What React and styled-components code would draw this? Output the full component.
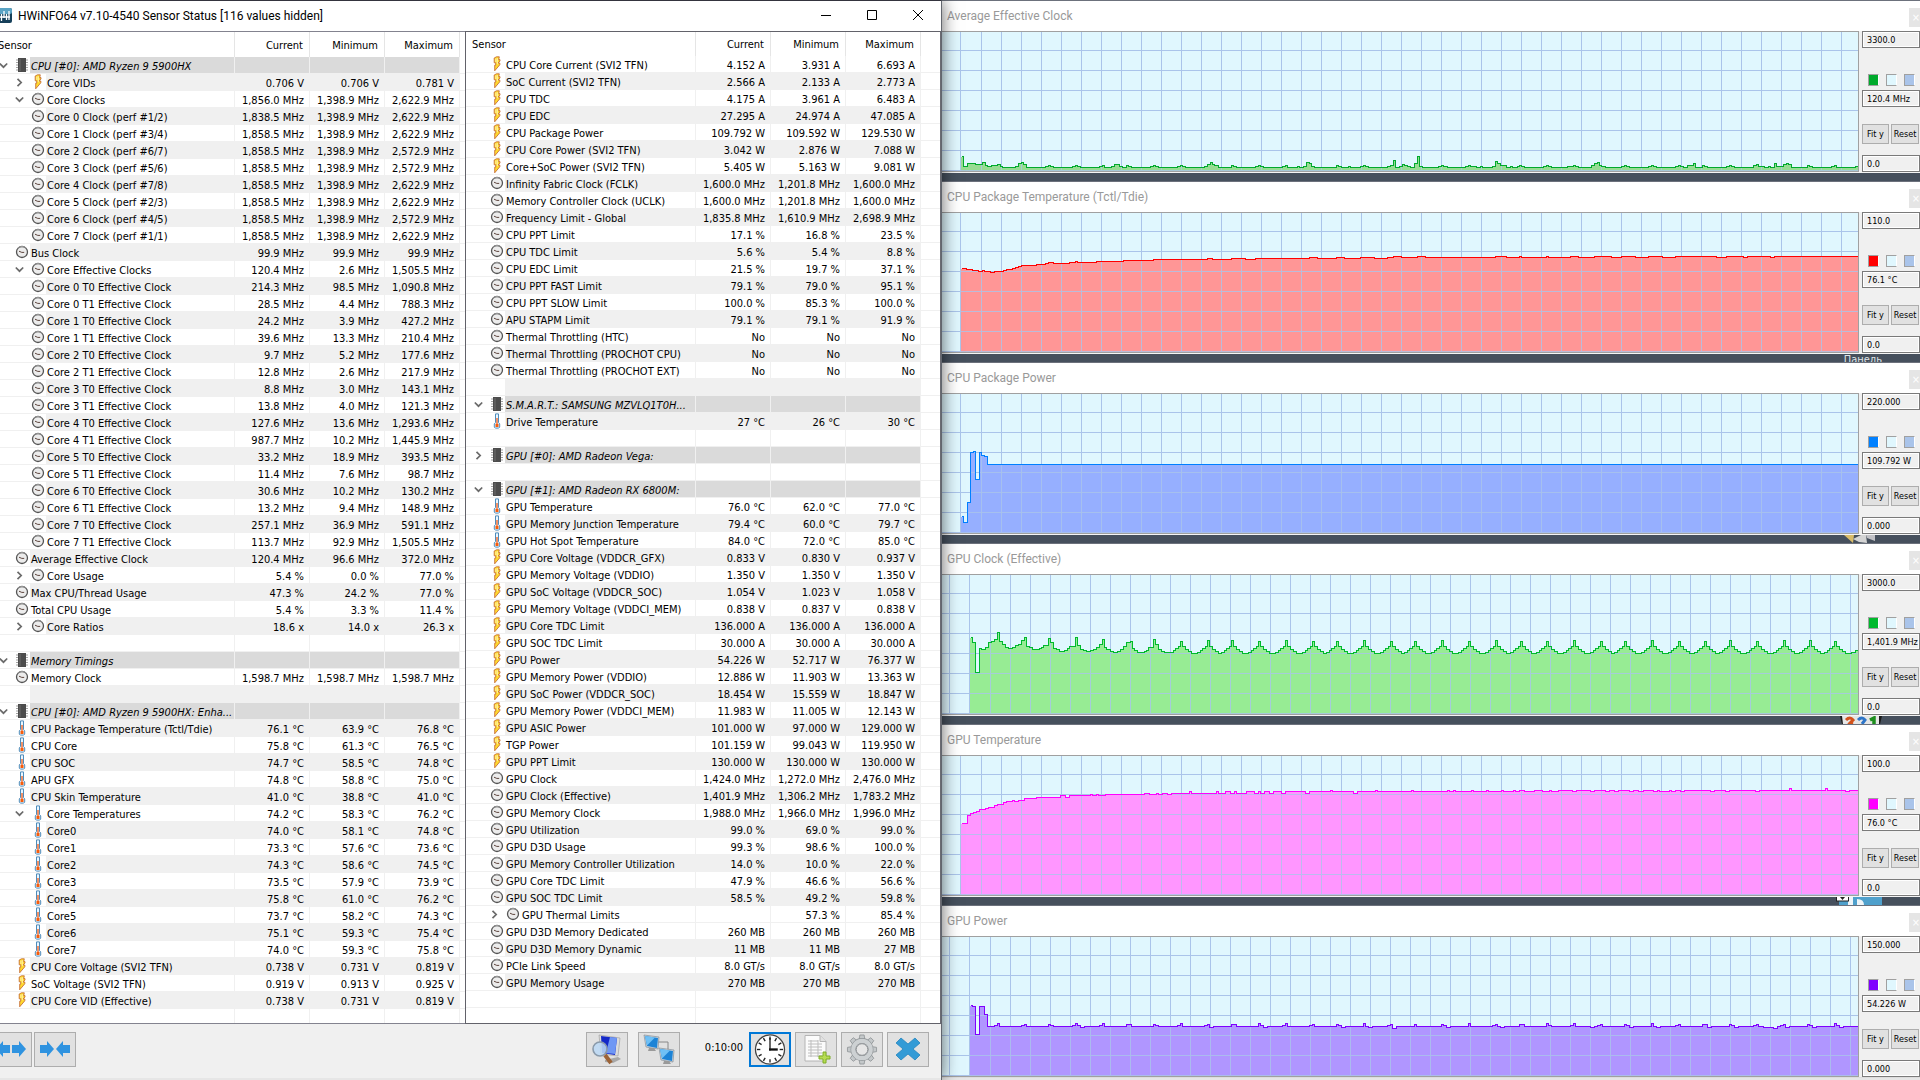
import React from "react";
import styled, { createGlobalStyle, css } from "styled-components";

const uiFont = '"DejaVu Sans Condensed", "DejaVu Sans", sans-serif';
const titleFont = 'Roboto, "Noto Sans", sans-serif';

const GlobalStyle = createGlobalStyle`
  * { box-sizing: border-box; }
  html, body { margin: 0; padding: 0; }
  body {
    background: #46505d;
    font-family: ${uiFont};
    font-size: 11px;
    color: #000;
    overflow: hidden;
  }
  button, input { font: inherit; color: inherit; margin: 0; padding: 0; border-radius: 0; }
`;

/* ---------- sensor data: indent level, icon kind, name, current, min, max ---------- */

const same = (v) => [v, v, v];

const cpuRows = [
  { group: true, open: true, name: "CPU [#0]: AMD Ryzen 9 5900HX" },
  { level: 1, kind: "bolt", open: false, name: "Core VIDs", v: ["0.706 V", "0.706 V", "0.781 V"] },
  { level: 1, kind: "clock", open: true, name: "Core Clocks", v: ["1,856.0 MHz", "1,398.9 MHz", "2,622.9 MHz"] },
  ...[
    ["Core 0 Clock (perf #1/2)", "1,838.5 MHz", "2,622.9 MHz"],
    ["Core 1 Clock (perf #3/4)", "1,858.5 MHz", "2,622.9 MHz"],
    ["Core 2 Clock (perf #6/7)", "1,858.5 MHz", "2,572.9 MHz"],
    ["Core 3 Clock (perf #5/6)", "1,858.5 MHz", "2,572.9 MHz"],
    ["Core 4 Clock (perf #7/8)", "1,858.5 MHz", "2,622.9 MHz"],
    ["Core 5 Clock (perf #2/3)", "1,858.5 MHz", "2,622.9 MHz"],
    ["Core 6 Clock (perf #4/5)", "1,858.5 MHz", "2,572.9 MHz"],
    ["Core 7 Clock (perf #1/1)", "1,858.5 MHz", "2,622.9 MHz"],
  ].map(([name, cur, max]) => ({ level: 1, kind: "clock", name, v: [cur, "1,398.9 MHz", max] })),
  { kind: "clock", name: "Bus Clock", v: same("99.9 MHz") },
  { level: 1, kind: "clock", open: true, name: "Core Effective Clocks", v: ["120.4 MHz", "2.6 MHz", "1,505.5 MHz"] },
  ...[
    ["214.3", "98.5", "1,090.8"],
    ["28.5", "4.4", "788.3"],
    ["24.2", "3.9", "427.2"],
    ["39.6", "13.3", "210.4"],
    ["9.7", "5.2", "177.6"],
    ["12.8", "2.6", "217.9"],
    ["8.8", "3.0", "143.1"],
    ["13.8", "4.0", "121.3"],
    ["127.6", "13.6", "1,293.6"],
    ["987.7", "10.2", "1,445.9"],
    ["33.2", "18.9", "393.5"],
    ["11.4", "7.6", "98.7"],
    ["30.6", "10.2", "130.2"],
    ["13.2", "9.4", "148.9"],
    ["257.1", "36.9", "591.1"],
    ["113.7", "92.9", "1,505.5"],
  ].map((v, i) => ({
    level: 1,
    kind: "clock",
    name: `Core ${Math.floor(i / 2)} T${i % 2} Effective Clock`,
    v: v.map((n) => `${n} MHz`),
  })),
  { kind: "clock", name: "Average Effective Clock", v: ["120.4 MHz", "96.6 MHz", "372.0 MHz"] },
  { level: 1, kind: "clock", open: false, name: "Core Usage", v: ["5.4 %", "0.0 %", "77.0 %"] },
  { kind: "clock", name: "Max CPU/Thread Usage", v: ["47.3 %", "24.2 %", "77.0 %"] },
  { kind: "clock", name: "Total CPU Usage", v: ["5.4 %", "3.3 %", "11.4 %"] },
  { level: 1, kind: "clock", open: false, name: "Core Ratios", v: ["18.6 x", "14.0 x", "26.3 x"] },
  { blank: true },
  { group: true, open: true, name: "Memory Timings" },
  { kind: "clock", name: "Memory Clock", v: same("1,598.7 MHz") },
  { blank: true },
  { group: true, open: true, name: "CPU [#0]: AMD Ryzen 9 5900HX: Enha..." },
  { kind: "temp", name: "CPU Package Temperature (Tctl/Tdie)", v: ["76.1 °C", "63.9 °C", "76.8 °C"] },
  { kind: "temp", name: "CPU Core", v: ["75.8 °C", "61.3 °C", "76.5 °C"] },
  { kind: "temp", name: "CPU SOC", v: ["74.7 °C", "58.5 °C", "74.8 °C"] },
  { kind: "temp", name: "APU GFX", v: ["74.8 °C", "58.8 °C", "75.0 °C"] },
  { kind: "temp", name: "CPU Skin Temperature", v: ["41.0 °C", "38.8 °C", "41.0 °C"] },
  { level: 1, kind: "temp", open: true, name: "Core Temperatures", v: ["74.2 °C", "58.3 °C", "76.2 °C"] },
  ...[
    ["74.0", "58.1", "74.8"],
    ["73.3", "57.6", "73.6"],
    ["74.3", "58.6", "74.5"],
    ["73.5", "57.9", "73.9"],
    ["75.8", "61.0", "76.2"],
    ["73.7", "58.2", "74.3"],
    ["75.1", "59.3", "75.4"],
    ["74.0", "59.3", "75.8"],
  ].map((v, i) => ({ level: 1, kind: "temp", name: `Core${i}`, v: v.map((n) => `${n} °C`) })),
  { kind: "bolt", name: "CPU Core Voltage (SVI2 TFN)", v: ["0.738 V", "0.731 V", "0.819 V"] },
  { kind: "bolt", name: "SoC Voltage (SVI2 TFN)", v: ["0.919 V", "0.913 V", "0.925 V"] },
  { kind: "bolt", name: "CPU Core VID (Effective)", v: ["0.738 V", "0.731 V", "0.819 V"] },
  { blank: true, last: true },
].map((r, i) => ({ ...r, shaded: i % 2 === 1 }));

const gpuRows = [
  { kind: "bolt", name: "CPU Core Current (SVI2 TFN)", v: ["4.152 A", "3.931 A", "6.693 A"] },
  { kind: "bolt", name: "SoC Current (SVI2 TFN)", v: ["2.566 A", "2.133 A", "2.773 A"] },
  { kind: "bolt", name: "CPU TDC", v: ["4.175 A", "3.961 A", "6.483 A"] },
  { kind: "bolt", name: "CPU EDC", v: ["27.295 A", "24.974 A", "47.085 A"] },
  { kind: "bolt", name: "CPU Package Power", v: ["109.792 W", "109.592 W", "129.530 W"] },
  { kind: "bolt", name: "CPU Core Power (SVI2 TFN)", v: ["3.042 W", "2.876 W", "7.088 W"] },
  { kind: "bolt", name: "Core+SoC Power (SVI2 TFN)", v: ["5.405 W", "5.163 W", "9.081 W"] },
  { kind: "clock", name: "Infinity Fabric Clock (FCLK)", v: ["1,600.0 MHz", "1,201.8 MHz", "1,600.0 MHz"] },
  { kind: "clock", name: "Memory Controller Clock (UCLK)", v: ["1,600.0 MHz", "1,201.8 MHz", "1,600.0 MHz"] },
  { kind: "clock", name: "Frequency Limit - Global", v: ["1,835.8 MHz", "1,610.9 MHz", "2,698.9 MHz"] },
  { kind: "clock", name: "CPU PPT Limit", v: ["17.1 %", "16.8 %", "23.5 %"] },
  { kind: "clock", name: "CPU TDC Limit", v: ["5.6 %", "5.4 %", "8.8 %"] },
  { kind: "clock", name: "CPU EDC Limit", v: ["21.5 %", "19.7 %", "37.1 %"] },
  { kind: "clock", name: "CPU PPT FAST Limit", v: ["79.1 %", "79.0 %", "95.1 %"] },
  { kind: "clock", name: "CPU PPT SLOW Limit", v: ["100.0 %", "85.3 %", "100.0 %"] },
  { kind: "clock", name: "APU STAPM Limit", v: ["79.1 %", "79.1 %", "91.9 %"] },
  { kind: "clock", name: "Thermal Throttling (HTC)", v: same("No") },
  { kind: "clock", name: "Thermal Throttling (PROCHOT CPU)", v: same("No") },
  { kind: "clock", name: "Thermal Throttling (PROCHOT EXT)", v: same("No") },
  { blank: true },
  { group: true, open: true, name: "S.M.A.R.T.: SAMSUNG MZVLQ1T0H..." },
  { kind: "temp", name: "Drive Temperature", v: ["27 °C", "26 °C", "30 °C"] },
  { blank: true },
  { group: true, open: false, name: "GPU [#0]: AMD Radeon Vega:" },
  { blank: true },
  { group: true, open: true, name: "GPU [#1]: AMD Radeon RX 6800M:" },
  { kind: "temp", name: "GPU Temperature", v: ["76.0 °C", "62.0 °C", "77.0 °C"] },
  { kind: "temp", name: "GPU Memory Junction Temperature", v: ["79.4 °C", "60.0 °C", "79.7 °C"] },
  { kind: "temp", name: "GPU Hot Spot Temperature", v: ["84.0 °C", "72.0 °C", "85.0 °C"] },
  { kind: "bolt", name: "GPU Core Voltage (VDDCR_GFX)", v: ["0.833 V", "0.830 V", "0.937 V"] },
  { kind: "bolt", name: "GPU Memory Voltage (VDDIO)", v: same("1.350 V") },
  { kind: "bolt", name: "GPU SoC Voltage (VDDCR_SOC)", v: ["1.054 V", "1.023 V", "1.058 V"] },
  { kind: "bolt", name: "GPU Memory Voltage (VDDCI_MEM)", v: ["0.838 V", "0.837 V", "0.838 V"] },
  { kind: "bolt", name: "GPU Core TDC Limit", v: same("136.000 A") },
  { kind: "bolt", name: "GPU SOC TDC Limit", v: same("30.000 A") },
  { kind: "bolt", name: "GPU Power", v: ["54.226 W", "52.717 W", "76.377 W"] },
  { kind: "bolt", name: "GPU Memory Power (VDDIO)", v: ["12.886 W", "11.903 W", "13.363 W"] },
  { kind: "bolt", name: "GPU SoC Power (VDDCR_SOC)", v: ["18.454 W", "15.559 W", "18.847 W"] },
  { kind: "bolt", name: "GPU Memory Power (VDDCI_MEM)", v: ["11.983 W", "11.005 W", "12.143 W"] },
  { kind: "bolt", name: "GPU ASIC Power", v: ["101.000 W", "97.000 W", "129.000 W"] },
  { kind: "bolt", name: "TGP Power", v: ["101.159 W", "99.043 W", "119.950 W"] },
  { kind: "bolt", name: "GPU PPT Limit", v: same("130.000 W") },
  { kind: "clock", name: "GPU Clock", v: ["1,424.0 MHz", "1,272.0 MHz", "2,476.0 MHz"] },
  { kind: "clock", name: "GPU Clock (Effective)", v: ["1,401.9 MHz", "1,306.2 MHz", "1,783.2 MHz"] },
  { kind: "clock", name: "GPU Memory Clock", v: ["1,988.0 MHz", "1,966.0 MHz", "1,996.0 MHz"] },
  { kind: "clock", name: "GPU Utilization", v: ["99.0 %", "69.0 %", "99.0 %"] },
  { kind: "clock", name: "GPU D3D Usage", v: ["99.3 %", "98.6 %", "100.0 %"] },
  { kind: "clock", name: "GPU Memory Controller Utilization", v: ["14.0 %", "10.0 %", "22.0 %"] },
  { kind: "clock", name: "GPU Core TDC Limit", v: ["47.9 %", "46.6 %", "56.6 %"] },
  { kind: "clock", name: "GPU SOC TDC Limit", v: ["58.5 %", "49.2 %", "59.8 %"] },
  { level: 1, kind: "clock", open: false, name: "GPU Thermal Limits", v: ["", "57.3 %", "85.4 %"] },
  { kind: "clock", name: "GPU D3D Memory Dedicated", v: same("260 MB") },
  { kind: "clock", name: "GPU D3D Memory Dynamic", v: ["11 MB", "11 MB", "27 MB"] },
  { kind: "clock", name: "PCIe Link Speed", v: same("8.0 GT/s") },
  { kind: "clock", name: "GPU Memory Usage", v: same("270 MB") },
  { blank: true },
  { blank: true, last: true },
].map((r, i) => ({ ...r, shaded: i < 51 ? i % 2 === 1 : i === 52 || i === 54 }));

/* ---------- chart series: "x,y" starts of flat steps ---------- */

const parse = (s) => s.trim().split(/\s+/).map((p) => p.split(",").map(Number));

const avgClock = parse(`19,124 21,134 25,131 33,132 40,130 43,133 45,134 49,133 55,132 58,134 60,135 73,134 76,131
79,130 81,132 84,135 103,134 106,133 108,134 111,135 130,134 133,133 135,134 138,135 157,134 160,133 162,135 169,134
172,132 177,134 180,135 184,133 186,134 189,135 208,134 211,133 213,134 216,135 235,134 238,133 240,134 243,135
262,134 265,132 268,130 270,132 272,133 276,135 289,133 291,134 294,135 313,134 316,133 318,134 321,135 340,134
343,133 345,135 355,134 357,135 361,134 364,130 367,131 369,134 372,135 394,133 396,134 399,135 406,134 408,135
418,134 421,133 423,134 426,135 445,134 448,133 451,128 453,135 457,134 460,132 462,133 465,134 468,135 472,131
475,124 477,134 480,135 496,134 499,133 501,134 505,135 523,134 526,133 528,134 534,135 538,134 540,135 550,134
553,129 555,131 558,133 564,135 568,134 570,135 575,134 577,133 579,134 582,135 601,134 604,133 606,134 609,135
625,134 631,133 633,134 636,135 649,133 652,131 655,130 657,133 659,134 663,135 679,134 682,133 684,134 687,135
706,134 709,133 711,134 714,135 733,134 736,133 738,134 741,135 745,133 751,131 753,135 760,133 762,134 765,135
784,134 787,133 789,134 792,135 811,133 814,132 816,134 822,135 826,134 828,135 832,131 834,134 841,132 844,131
846,132 849,135 865,133 867,134 870,135 889,134 892,133 894,135 913,134`);

const cpuTemp = parse(`19,55 24,56 30,57 36,58 40,57 42,58 48,59 52,58 61,57 64,56 70,55 73,54 76,53 79,52 94,51 103,50
106,49 111,50 127,49 133,48 135,49 154,48 181,47 211,46 265,45 270,46 289,45 303,46 313,45 367,44 375,45 394,44 402,45
418,44 432,45 445,44 451,43 459,44 475,43 483,44 553,43 564,44 577,43 579,44 604,43 606,44 628,43 636,44 652,43 669,44
679,43 693,44 706,43 720,44 733,43 774,44 784,43 801,44 805,43 828,44 832,43`);

const cpuPower = parse("19,122 21,128 25,108 28,58 31,57 33,85 37,58 39,61 42,62 45,70");

const clockPeaks = [
  238, 265, 289, 316, 343, 370, 394, 421, 448, 472, 499, 526, 553, 578, 604, 631, 658, 682, 709, 736, 762, 787, 814,
  841, 867, 892,
];
const gpuClock = [
  ...parse(`28,62 30,67 33,97 37,73 39,74 43,72 46,67 49,66 52,64 55,57 57,66 60,69 63,72 66,73 70,72 73,70 76,69 79,65
82,62 84,71 87,72 90,74 97,73 99,72 101,70 106,63 108,67 111,73 114,74 117,76 122,75 125,73 127,71 133,62 135,70 138,74
141,75 144,76 148,75 151,74 154,72 157,69 160,64 162,72 164,74 168,76 171,77 175,76 178,74 181,71 184,67 188,66 190,73
192,75 195,77 202,76 204,75 206,72 211,64 213,69 216,74 219,76 222,77`),
  ...clockPeaks.flatMap((p) => [
    [p - 10, 77],
    [p - 7, 75],
    [p - 5, 73],
    [p - 2, 71],
    [p, p % 2 ? 65 : 66],
    [p + 2, 71],
    [p + 5, 74],
    [p + 8, 76],
    [p + 11, 78],
  ]),
  [909, 77],
  [913, 75],
];

const gpuTemp = parse(`19,67 25,59 28,57 31,56 34,55 37,53 43,52 46,51 52,49 55,48 61,46 64,45 70,44 72,45 76,44 82,42
94,41 118,39 123,41 127,39 148,38 150,39 154,38 156,39 163,38 202,37 207,38 214,37 216,38 220,37 225,38 229,37 247,35
249,37 274,35 276,37 283,35 288,37 292,35 294,37 304,35 312,37 316,35 318,37 322,35 327,37 331,35 339,37 343,35 363,37
367,35 388,34 390,35 411,37 415,35 433,34 435,35 469,34 471,35 505,34 507,35 511,34 513,35 529,34 531,35 544,34 546,35
559,34 561,35 571,34 573,35 577,34 582,35 592,34 600,35 607,34 609,35 616,34 630,35 634,34 648,35 652,34 663,35 667,34
672,35 676,34 687,35 691,34 696,35 701,34 711,35 715,34 717,35 727,34 729,35 733,34 738,35 742,34 768,35 772,34 783,35
787,34 813,35 817,34 847,32 849,34 883,32 885,34 903,35 907,34`);

const gpuPower = parse(`28,68 30,69 33,97 37,69 42,77 45,89 52,88 55,86 57,89 79,88 82,87 84,89 106,87 108,88 111,89
130,88 133,86 135,88 138,90 142,89 157,88 160,86 162,89 184,87 189,89 211,87 213,88 216,89 235,88 238,86 240,89 262,88
265,87 267,90 271,89 289,87 294,89 316,86 318,88 321,90 325,89 340,88 343,86 345,89 367,88 370,87 372,89 394,87 396,88
399,90 403,89 421,86 423,89 426,90 430,89 445,88 448,87 450,91 454,89 472,87 474,89 499,87 501,88 504,90 508,89 526,86
528,89 550,88 553,87 555,89 558,90 562,89 577,87 582,89 604,86 606,88 609,89 628,88 631,86 633,89 648,90 652,89 655,88
658,87 660,89 682,87 684,88 687,90 691,89 709,86 711,89 714,90 718,89 733,88 736,87 738,89 760,87 765,90 769,89 787,87
789,88 792,90 796,89 811,88 814,87 816,89 821,90 831,91 835,89 838,88 841,87 843,90 847,89 865,87 867,88 870,90 874,89
892,86 894,88 897,90 901,89`);

const charts = [
  { title: "Average Effective Clock", max: "3300.0", value: "120.4 MHz", min: "0.0", line: "#00aa2c", fill: "#97dc92", first: 18, data: avgClock },
  { title: "CPU Package Temperature (Tctl/Tdie)", max: "110.0", value: "76.1 °C", min: "0.0", line: "#ff0000", fill: "#ff9696", first: 18, data: cpuTemp, peek: "label" },
  { title: "CPU Package Power", max: "220.000", value: "109.792 W", min: "0.000", line: "#0080ff", fill: "#96afff", first: 18, data: cpuPower, peek: "cone" },
  { title: "GPU Clock (Effective)", max: "3000.0", value: "1,401.9 MHz", min: "0.0", line: "#00b92d", fill: "#97ec94", first: 27, data: gpuClock, peek: "digits" },
  { title: "GPU Temperature", max: "100.0", value: "76.0 °C", min: "0.0", line: "#ff00ff", fill: "#ff96ff", first: 18, data: gpuTemp, peek: "tile" },
  { title: "GPU Power", max: "150.000", value: "54.226 W", min: "0.000", line: "#8000ff", fill: "#b096ff", first: 27, data: gpuPower },
];

/* ---------- desktop and sensor window ---------- */

const Desktop = styled.main`
  display: grid;
  grid-template-columns: minmax(0, 942fr) minmax(0, 978fr);
  min-height: 100vh;
  overflow: hidden;
`;

const SensorWindow = styled.section`
  display: flex;
  flex-direction: column;
  margin-left: -10px;
  background: #f0f0f0;
  border-top: 1px solid #34343e;
  border-right: 1px solid #62666e;
  box-shadow: 0 0 16px rgba(0, 0, 0, 0.6);
  z-index: 1;
`;

const TitleBar = styled.header`
  display: flex;
  align-items: center;
  height: 30px;
  padding-left: 6px;
  background: #fff;
  svg { flex: none; }
`;

const WindowTitle = styled.h1`
  flex: 1;
  margin: 0;
  padding: 0 0 0 6px;
  font: 400 12px/18px ${titleFont};
`;

const CaptionButton = styled.button`
  display: grid;
  place-items: center;
  width: 46px;
  height: 30px;
  padding-bottom: 2px;
  border: 0;
  background: none;
`;

const Lists = styled.div`
  display: grid;
  grid-template-columns: minmax(0, 475fr) minmax(0, 476fr);
`;

const Panel = styled.div`
  background: #fff;
  border: 0 solid #83838f;
  border-width: 1px 0;
  ${(p) => p.$framed && css`
    border-width: 1px;
    border-color: #62626a;
    border-right-color: #6b6b72;
  `}
`;

const SensorTable = styled.table`
  width: 100%;
  table-layout: fixed;
  border-collapse: separate;
  border-spacing: 0;
`;

const ValueCol = styled.col`
  width: 75px;
`;

const TailCol = styled.col`
  width: ${(p) => p.$w}px;
`;

const HeadCell = styled.th`
  height: ${(p) => p.$h}px;
  padding: 2px 6px 0 0;
  border-right: 1px solid #e5e5e5;
  font-weight: 400;
  line-height: 16px;
  text-align: right;
  &:last-child { border-right: 0; }
  ${(p) => p.$name && css`
    padding: 2px 0 0 ${p.$inset ? 6 : 8}px;
    text-align: left;
  `}
`;

const rowBack = (p) => (p.$group ? "#dadada" : p.$shaded ? "#f0f0f0" : "#fff");

const NameCell = styled.td`
  padding: 0;
  border-right: 1px solid #f0f0f0;
  border-bottom: 1px solid #f0f0f0;
`;

const NameLine = styled.div`
  display: flex;
  height: 16px;
  padding-left: ${(p) => (p.$inset ? 4 : 5) + (p.$level || 0) * 16}px;
`;

const Twisty = styled.span`
  display: grid;
  place-items: center;
  flex: none;
  width: 16px;
`;

const IconBox = styled.span`
  display: grid;
  place-items: center;
  flex: none;
  width: 19px;
  padding-left: 3px;
`;

const Label = styled.span`
  flex: 1;
  min-width: 0;
  padding: 2px 0 0 1px;
  line-height: 15px;
  white-space: nowrap;
  overflow: hidden;
  font-style: ${(p) => (p.$group ? "italic" : "normal")};
  background: ${rowBack};
`;

const ValueCell = styled.td`
  height: 17px;
  padding: 2px 5px 0 0;
  border-right: 1px solid #f0f0f0;
  border-bottom: 1px solid #f0f0f0;
  line-height: 14px;
  text-align: right;
  white-space: nowrap;
  background: ${rowBack};
`;

const Reading = styled.span`
  display: block;
  height: 14px;
  line-height: 15px;
`;

const TailCell = styled.td`
  padding: 0;
  border-bottom: 1px solid #f0f0f0;
`;

const LastRow = styled.tr`
  height: ${(p) => p.$h}px;
  td { padding: 0; border-right: 1px solid #f0f0f0; }
  td:last-child { border-right: 0; }
`;

const Toolbar = styled.footer`
  display: flex;
  align-items: center;
  justify-content: space-between;
  height: 54px;
  padding: 0 12px 4px 0;
`;

const ToolGroup = styled.div`
  display: flex;
  align-items: center;
  gap: ${(p) => p.$gap}px;
`;

const ToolButton = styled.button`
  display: grid;
  place-items: center;
  width: 42px;
  height: 35px;
  border: ${(p) => (p.$active ? "2px solid #0078d7" : "1px solid #adadad")};
  background: #e1e1e1;
`;

const Elapsed = styled.time`
  padding: 0 2px 3px 21px;
  line-height: 14px;
`;

const WindowEdge = styled.div`
  flex: 1;
  background: #e6e6e6;
`;

/* ---------- chart windows ---------- */

const ChartColumn = styled.div`
  display: flex;
  flex-direction: column;
`;

const ChartWindow = styled.section`
  border-top: 1px solid #6c717c;
  background: #f0f0f0;
`;

const ChartTitleBar = styled.header`
  display: flex;
  align-items: center;
  justify-content: space-between;
  height: 30px;
  background: #fff;
`;

const ChartTitle = styled.h2`
  margin: 0;
  padding: 0 0 0 5px;
  color: #999;
  font: 400 12px/18px ${titleFont};
`;

const ChartClose = styled.button`
  width: 11px;
  height: 19px;
  margin-top: 3px;
  border: 0;
  background: #e5e5e5;
  color: #fff;
  text-align: right;
  line-height: 16px;
  overflow: hidden;
`;

const ChartBody = styled.div`
  display: flex;
  gap: 3px;
`;

const Plot = styled.div`
  flex: 1;
  min-width: 0;
  border: 1px solid #a0a0a0;
  border-left: 0;
  svg { display: block; width: 100%; height: 139px; background: #e0f7fe; }
`;

const Side = styled.div`
  display: flex;
  flex-direction: column;
  justify-content: space-between;
  flex: none;
  width: 58px;
`;

const Field = styled.input`
  width: 58px;
  height: 17px;
  padding-left: 4px;
  border: 1px solid #7a7a7a;
  outline: 0;
  background: #f0f0f0;
  box-shadow: inset 0 0 0 1px #fff;
  font-size: 9px;
`;

const SideMiddle = styled.div`
  display: flex;
  flex-direction: column;
  padding-top: 15px;
`;

const Swatches = styled.div`
  display: flex;
  gap: 7px;
  padding: 0 5px 4px 6px;
`;

const Swatch = styled.button`
  width: 11px;
  height: 12px;
  border: 1px solid #a0a0a0;
  border-right-color: #fff;
  background: ${(p) => p.$color};
`;

const SideButtons = styled.div`
  display: flex;
  gap: 2px;
  padding: 17px 1px 0 0;
`;

const SideButton = styled.button`
  flex: ${(p) => p.$grow} 1 0;
  height: 20px;
  border: 1px solid #adadad;
  background: #e1e1e1;
  font-size: 9px;
  white-space: nowrap;
`;

const Gap = styled.div`
  display: flex;
  justify-content: flex-end;
  height: ${(p) => (p.$last ? 3 : 9)}px;
  padding-right: 38px;
  border-top: 1px solid ${(p) => (p.$last ? "#ddd" : "#f5f5f5")};
  background: ${(p) => (p.$last ? "#e6e6e6" : "#46505d")};
  overflow: hidden;
`;

const DesktopLabel = styled.span`
  color: #dfe3e8;
  line-height: 12px;
`;

/* ---------- small icons ---------- */

function ClockIcon() {
  return (
    <svg width="14" height="14" viewBox="0 0 14 14">
      <circle cx="7" cy="7" r="5.5" fill="#ececec" stroke="#555" strokeWidth="1.3" />
      <path d="M2.800 3.400A5.500 5.500 0 0 1 11.200 3.400" fill="none" stroke="#9a9a9a" />
      <path d="M4 6.200l2.800 1.200h2.400" fill="none" stroke="#5e463e" strokeWidth="1" />
    </svg>
  );
}

function BoltIcon() {
  return (
    <svg width="8" height="16" viewBox="0 0 8 16">
      <path d="M3.500 .8L1.200 2v4.800h1.500v2.400h-1v5.600L6.800 8.800V7H5.200L7 5V3.600H5.700L6.300 .8z" fill="#ffd92e" stroke="#c0622c" strokeWidth=".8" />
      <path d="M2.900 2.600v3.400M4.300 2.200v6" stroke="#fff6b8" strokeWidth=".9" />
    </svg>
  );
}

function TempIcon() {
  return (
    <svg width="8" height="16" viewBox="0 0 8 16">
      <path d="M2.500 .9h3v8.600l1.200 1.400v3.200l-1 1H2.300l-1-1v-3.200l1.200-1.400z" fill="#eaf6ff" stroke="#4f8cba" />
      <path d="M4 5v7" stroke="#f2682a" strokeWidth="1.4" />
      <rect x="2.500" y="11" width="3" height="3" fill="#f65c0c" />
    </svg>
  );
}

function ChipIcon() {
  return (
    <svg width="12" height="14" viewBox="0 0 12 14">
      <path d="M0 2h12M0 4.5h12M0 7h12M0 9.5h12M0 12h12" stroke="#a2a2a2" />
      <rect x="2" y="0" width="8" height="14" fill="#4c4c4c" />
      <path d="M3 1h2v12H3z" fill="#5c5c5c" />
    </svg>
  );
}

function Chevron({ open }) {
  return (
    <svg width="9" height="9" viewBox="0 0 9 9">
      <path d={open ? "M.8 2.5l3.7 3.7 3.7-3.7" : "M2.5 .8l3.7 3.7-3.7 3.7"} fill="none" stroke="#6a6a6a" strokeWidth="1.7" />
    </svg>
  );
}

const icons = { clock: ClockIcon, bolt: BoltIcon, temp: TempIcon, chip: ChipIcon };

/* ---------- toolbar icons ---------- */

function ArrowsIcon({ inward }) {
  const right = "M0 4h7V0l7 8-7 8v-4H0z";
  return (
    <svg width="30" height="16" viewBox="0 0 30 16" fill="#2f93e0">
      <path d={right} transform={inward ? "translate(0 0)" : "translate(16 0)"} />
      <path d={right} transform={inward ? "translate(30 0) scale(-1 1)" : "translate(14 0) scale(-1 1)"} />
    </svg>
  );
}

function InspectIcon() {
  return (
    <svg width="32" height="31" viewBox="0 0 32 31">
      <path d="M8 1l21 3-2 18-17-2z" fill="#dcdcdc" stroke="#999" strokeWidth=".6" />
      <path d="M10 2l16 2-2 17-13-2z" fill="#1428c8" />
      <path d="M19 3l7 1-2 16-9-1z" fill="#6f97f4" />
      <path d="M14 26l13-3 3 2-8 4-8-1z" fill="#a8a8a8" />
      <circle cx="9" cy="15" r="7" fill="#bcd8f4" fillOpacity=".88" stroke="#8a9aaa" strokeWidth="1.6" />
      <path d="M14 21l6 8" stroke="#9c6337" strokeWidth="4" />
    </svg>
  );
}

function NetworkIcon() {
  const monitor = (
    <g>
      <path d="M0 0l15 2-1 12-12-2z" fill="#cfd6dc" stroke="#75818c" strokeWidth=".6" />
      <path d="M1 1l13 2-1 10-10-2z" fill="#1c83d6" />
      <path d="M1 1l10 1.500-8 8z" fill="#6fc0f5" />
      <path d="M5 13h5l2 3H4z" fill="#9a9a9a" />
    </g>
  );
  return (
    <svg width="32" height="31" viewBox="0 0 32 31">
      <path d="M14 8h11v8" fill="none" stroke="#888" />
      <g transform="translate(1 1)">{monitor}</g>
      <g transform="translate(16 14)">{monitor}</g>
    </svg>
  );
}

function BigClockIcon() {
  const ticks = Array.from({ length: 12 }, (_, i) => i * 30);
  return (
    <svg width="32" height="31" viewBox="0 0 32 32">
      <circle cx="16" cy="16" r="15" fill="#fff" stroke="#444" strokeWidth="1.3" />
      {ticks.map((a) => (
        <path key={a} d="M16 2.500v3.500" stroke="#222" strokeWidth="1.4" transform={`rotate(${a} 16 16)`} />
      ))}
      <path d="M16 17V4" stroke="#111" strokeWidth="1.3" />
      <path d="M15 16h9" stroke="#111" strokeWidth="2.4" />
    </svg>
  );
}

function SheetIcon() {
  return (
    <svg width="30" height="31" viewBox="0 0 30 31">
      <path d="M4 1.500h15l6 6V27H4z" fill="#fbfbfb" stroke="#b4b4b4" />
      <path d="M19 1.500v6h6" fill="#e2e2e2" stroke="#b4b4b4" />
      <path d="M7 7h10M7 10h14M7 13h14M7 16h14M7 19h14M7 22h14M10 6v17M17 6v17" stroke="#bdbdbd" />
      <path d="M22 18h3v4h4v3h-4v4h-3v-4h-4v-3h4z" fill="#b7dc54" stroke="#7fae26" />
    </svg>
  );
}

function GearIcon() {
  const teeth = Array.from({ length: 8 }, (_, i) => i * 45);
  return (
    <svg width="32" height="31" viewBox="0 0 32 32">
      {teeth.map((a) => (
        <path key={a} d="M13 6l.8-5h4.400l.8 5z" fill="#c4c8ca" stroke="#8c9194" strokeWidth=".8" transform={`rotate(${a} 16 16)`} />
      ))}
      <circle cx="16" cy="16" r="9" fill="none" stroke="#8c9194" strokeWidth="5.600" />
      <circle cx="16" cy="16" r="9" fill="none" stroke="#cdd1d3" strokeWidth="4.400" />
      <circle cx="16" cy="16" r="6" fill="#e6e6e6" stroke="#8c9194" />
    </svg>
  );
}

function CloseIcon() {
  return (
    <svg width="26" height="24" viewBox="0 0 26 24">
      <path d="M6 1l7 6 7-6 5 5-7 6 7 6-5 5-7-6-7 6-5-5 7-6-7-6z" fill="#339bd6" stroke="#2585be" strokeWidth=".8" strokeLinejoin="round" />
    </svg>
  );
}

function AppIcon() {
  return (
    <svg width="16" height="16" viewBox="0 0 16 16">
      <rect width="16" height="15" y="0" rx="2" fill="#16405a" />
      <rect width="16" height="6" rx="2" fill="#5aa3c4" />
      <path d="M3 3v9M5.500 6v7M8 3v7M10.500 6v6M13 3v9M2 9h12" stroke="#fff" strokeWidth="1.300" />
    </svg>
  );
}

/* ---------- parts ---------- */

function SensorList({ rows, inset, headHeight, lastHeight, tail }) {
  return (
    <SensorTable>
      <colgroup>
        <col />
        <ValueCol />
        <ValueCol />
        <ValueCol />
        <TailCol $w={tail} />
      </colgroup>
      <thead>
        <tr>
          <HeadCell $name $inset={inset} $h={headHeight}>Sensor</HeadCell>
          <HeadCell>Current</HeadCell>
          <HeadCell>Minimum</HeadCell>
          <HeadCell>Maximum</HeadCell>
          <HeadCell aria-hidden="true" />
        </tr>
      </thead>
      <tbody>
        {rows.map((row, i) => {
          if (row.last) {
            return (
              <LastRow key={i} $h={lastHeight}>
                <td /><td /><td /><td /><td />
              </LastRow>
            );
          }
          const Icon = row.group ? ChipIcon : icons[row.kind];
          const values = row.v || ["", "", ""];
          return (
            <tr key={i}>
              <NameCell>
                <NameLine $level={row.level} $inset={inset}>
                  <Twisty>{row.open !== undefined && <Chevron open={row.open} />}</Twisty>
                  <IconBox>{Icon && <Icon />}</IconBox>
                  <Label $group={row.group} $shaded={row.shaded}>{row.name}</Label>
                </NameLine>
              </NameCell>
              {values.map((v, k) => (
                <ValueCell key={k} $group={row.group} $shaded={row.shaded}>
                  <Reading>{v}</Reading>
                </ValueCell>
              ))}
              <TailCell />
            </tr>
          );
        })}
      </tbody>
    </SensorTable>
  );
}

const PLOT_HEIGHT = 139;
const FAR = 4000;

function stepPath(data) {
  return data.reduce((d, [x, y], i) => (i === 0 ? `M${x + 0.5} ${y + 0.5}` : `${d}H${x + 0.5}V${y + 0.5}`), "") + `H${FAR}`;
}

function gridPath(first) {
  let d = "";
  for (let y = 18; y < PLOT_HEIGHT; y += 20) d += `M0 ${y + 0.5}H${FAR}`;
  for (let x = first; x >= 0; x -= 20) d += `M${x + 0.5} 0V${PLOT_HEIGHT}`;
  for (let x = first + 21; x < FAR; x += 20) d += `M${x + 0.5} 0V${PLOT_HEIGHT}`;
  return d;
}

function PlotArea({ chart }) {
  const line = stepPath(chart.data);
  const grid = gridPath(chart.first);
  return (
    <svg shapeRendering="crispEdges" role="img" aria-label={chart.title}>
      <path d={grid} stroke="#aac4ea" />
      <path d={`${line}V${PLOT_HEIGHT}H${chart.data[0][0]}Z`} fill={chart.fill} />
      <path d={grid} stroke="#aac4ea" strokeOpacity=".8" />
      <path d={line} fill="none" stroke={chart.line} />
    </svg>
  );
}

function Peek({ kind }) {
  if (kind === "label") return <DesktopLabel>Панель</DesktopLabel>;
  if (kind === "cone") {
    return (
      <svg width="38" height="8" viewBox="0 0 38 8">
        <path d="M0 0h10l-1 8z" fill="#d9bc6a" />
        <path d="M9 4l8-4h5l1 8-8-1z" fill="#d4d4d4" />
        <path d="M22 0h9v6l-8-3z" fill="#c2c2c6" />
      </svg>
    );
  }
  if (kind === "digits") {
    return (
      <svg width="42" height="8" viewBox="0 0 42 8">
        <path d="M0 0h42l-2 8H2z" fill="#1a1a1a" />
        <path d="M2 0h37v8H3z" fill="#e6e6e6" />
        <path d="M6 4q4-4 7 0l-3 3 3 1" fill="none" stroke="#d4521a" strokeWidth="3" />
        <path d="M18 4q4-4 7 0l-3 4" fill="none" stroke="#2e75c8" strokeWidth="3" />
        <path d="M30 4l4-2v6" fill="none" stroke="#1e8e1e" strokeWidth="3.500" />
      </svg>
    );
  }
  if (kind === "tile") {
    return (
      <svg width="46" height="8" viewBox="0 0 46 8">
        <path d="M3 0h43v8H3z" fill="#4fa0cc" />
        <path d="M12 0h5v8h-5zM21 2q7 0 7 6h-7z" fill="#eef4f8" />
        <rect x=".5" y="-3" width="12" height="7" fill="#fff" stroke="#222" />
        <path d="M4 0h5L6.500 3z" fill="#222" />
      </svg>
    );
  }
  return null;
}

function Chart({ chart, last }) {
  return (
    <>
      <ChartWindow>
        <ChartTitleBar>
          <ChartTitle>{chart.title}</ChartTitle>
          <ChartClose aria-label={`Close ${chart.title}`}>×</ChartClose>
        </ChartTitleBar>
        <ChartBody>
          <Plot>
            <PlotArea chart={chart} />
          </Plot>
          <Side>
            <Field readOnly aria-label="Y axis maximum" value={chart.max} />
            <SideMiddle>
              <Swatches>
                <Swatch aria-label="Line colour" $color={chart.line} />
                <Swatch aria-label="Background colour" $color="#e0f7fe" />
                <Swatch aria-label="Grid colour" $color="#aac4ea" />
              </Swatches>
              <Field readOnly aria-label="Current value" value={chart.value} />
              <SideButtons>
                <SideButton $grow={27}>Fit y</SideButton>
                <SideButton $grow={28}>Reset</SideButton>
              </SideButtons>
            </SideMiddle>
            <Field readOnly aria-label="Y axis minimum" value={chart.min} />
          </Side>
        </ChartBody>
      </ChartWindow>
      <Gap $last={last}>
        <Peek kind={chart.peek} />
      </Gap>
    </>
  );
}

export default function App() {
  return (
    <>
      <GlobalStyle />
      <Desktop>
        <SensorWindow>
          <TitleBar>
            <AppIcon />
            <WindowTitle>HWiNFO64 v7.10-4540 Sensor Status [116 values hidden]</WindowTitle>
            <CaptionButton aria-label="Minimize">
              <svg width="10" height="10"><path d="M0 5.500h10" stroke="#000" /></svg>
            </CaptionButton>
            <CaptionButton aria-label="Maximize">
              <svg width="10" height="10"><path d="M.5 .5h9v9h-9z" fill="none" stroke="#000" /></svg>
            </CaptionButton>
            <CaptionButton aria-label="Close">
              <svg width="10" height="10"><path d="M0 0l10 10M10 0L0 10" stroke="#000" /></svg>
            </CaptionButton>
          </TitleBar>
          <Lists>
            <Panel>
              <SensorList rows={cpuRows} headHeight={25} lastHeight={14} tail={5} />
            </Panel>
            <Panel $framed>
              <SensorList rows={gpuRows} inset headHeight={24} lastHeight={15} tail={19} />
            </Panel>
          </Lists>
          <Toolbar>
            <ToolGroup $gap={2}>
              <ToolButton aria-label="Expand columns"><ArrowsIcon /></ToolButton>
              <ToolButton aria-label="Shrink columns"><ArrowsIcon inward /></ToolButton>
            </ToolGroup>
            <ToolGroup $gap={4}>
              <ToolGroup $gap={10}>
                <ToolButton aria-label="System summary"><InspectIcon /></ToolButton>
                <ToolButton aria-label="Remote monitoring"><NetworkIcon /></ToolButton>
              </ToolGroup>
              <Elapsed>0:10:00</Elapsed>
              <ToolButton $active aria-label="Reset elapsed time"><BigClockIcon /></ToolButton>
              <ToolButton aria-label="Start logging"><SheetIcon /></ToolButton>
              <ToolButton aria-label="Settings"><GearIcon /></ToolButton>
              <ToolButton aria-label="Close sensors"><CloseIcon /></ToolButton>
            </ToolGroup>
          </Toolbar>
          <WindowEdge />
        </SensorWindow>
        <ChartColumn>
          {charts.map((chart, i) => (
            <Chart key={chart.title} chart={chart} last={i === charts.length - 1} />
          ))}
        </ChartColumn>
      </Desktop>
    </>
  );
}
